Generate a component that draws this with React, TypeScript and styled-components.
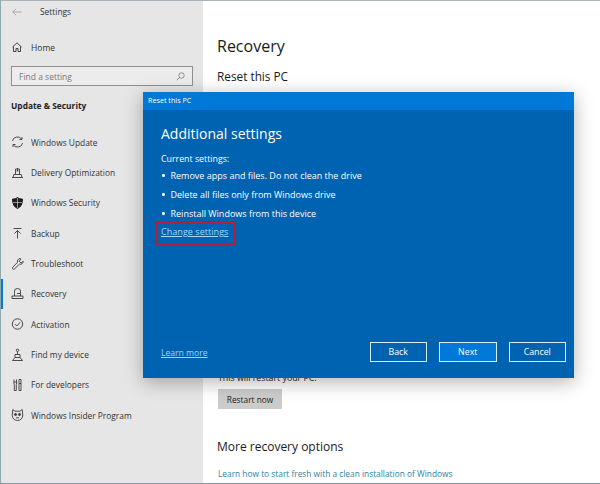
import React from "react";
import styled, { createGlobalStyle } from "styled-components";

const GlobalStyle = createGlobalStyle`
  html, body {
    margin: 0;
    padding: 0;
    background: #ffffff;
  }
  body {
    font-family: "Open Sans", "Noto Sans", sans-serif;
  }
`;

const Frame = styled.div`
  position: relative;
  display: flex;
  width: 600px;
  height: 484px;
  box-sizing: border-box;
  overflow: hidden;
  border-left: 1px solid #8fa9ad;
  border-top: 1px solid #a9b6b8;
  border-bottom: 1px solid #7f9ba3;
`;

const Sidebar = styled.aside`
  display: flex;
  flex-direction: column;
  width: 202px;
  flex-shrink: 0;
  background: #e6e6e6;
  color: #333333;
`;

const TitleRow = styled.div`
  display: flex;
  align-items: center;
  height: 21px;
  padding-left: 11px;
  font-size: 8.4px;
  gap: 18px;
`;

const HomeRow = styled.div`
  display: flex;
  align-items: center;
  gap: 9px;
  height: 20px;
  margin-top: 15px;
  padding-left: 11px;
  font-size: 8.5px;
`;

const SearchBox = styled.div`
  display: flex;
  align-items: center;
  justify-content: space-between;
  box-sizing: border-box;
  width: 182px;
  height: 20px;
  margin: 9px 0 0 10px;
  padding: 0 7px;
  background: #ececec;
  border: 1.5px solid #8f8f8f;
  color: #7a7a7a;
  font-size: 8.5px;
`;

const SectionTitle = styled.div`
  margin: 12px 0 13px 10px;
  font-size: 8.4px;
  font-weight: 700;
  line-height: 16px;
  color: #222;
`;

const NavRow = styled.div<{ $active?: boolean }>`
  display: flex;
  align-items: center;
  gap: 7px;
  height: 30.35px;
  box-sizing: border-box;
  padding-left: 8px;
  border-left: 2px solid ${(p) => (p.$active ? "#0078d7" : "transparent")};
  font-size: 8.4px;
  white-space: nowrap;
`;

const Main = styled.main`
  display: flex;
  flex-direction: column;
  align-items: flex-start;
  flex: 1;
  padding-left: 14px;
  color: #1a1a1a;
`;

const PageTitle = styled.h1`
  margin: 33px 0 0;
  font-size: 16px;
  font-weight: 400;
  line-height: 24px;
`;

const SubTitle = styled.h2`
  margin: 10px 0 0;
  font-size: 11.8px;
  font-weight: 400;
  line-height: 16px;
`;

const RestartNote = styled.p`
  margin: 287px 0 0 1px;
  font-size: 8.8px;
  line-height: 14px;
`;

const RestartButton = styled.button`
  width: 64px;
  height: 20px;
  margin: 4px 0 0 1px;
  padding: 0;
  border: 0;
  background: #cccccc;
  color: #222;
  font-family: inherit;
  font-size: 8.3px;
`;

const MoreTitle = styled.h2`
  margin: 29px 0 0;
  font-size: 12px;
  font-weight: 400;
  line-height: 18px;
`;

const MoreLink = styled.a`
  margin: 11px 0 0 1px;
  font-size: 8.35px;
  line-height: 13px;
  color: #2f7f9f;
  white-space: nowrap;
`;

const Dialog = styled.section`
  position: absolute;
  left: 142px;
  top: 91px;
  display: flex;
  flex-direction: column;
  width: 431px;
  height: 286px;
  background: #0063b1;
  color: #ffffff;
  box-shadow: 0 4px 18px rgba(0, 0, 0, 0.3);
`;

const DialogBar = styled.div`
  display: flex;
  align-items: center;
  box-sizing: border-box;
  height: 18px;
  padding: 0 0 2px 5px;
  background: #0078d7;
  font-size: 7.2px;
`;

const DialogBody = styled.div`
  display: flex;
  flex-direction: column;
  align-items: flex-start;
  flex: 1;
  padding: 14px 8px 0 18px;
`;

const DialogTitle = styled.h2`
  margin: 0;
  font-size: 14px;
  font-weight: 400;
  line-height: 20px;
`;

const CurrentLabel = styled.div`
  margin-top: 9px;
  font-size: 8.8px;
  line-height: 13px;
`;

const SettingsList = styled.ul`
  display: flex;
  flex-direction: column;
  gap: 6px;
  margin: 3px 0 0;
  padding: 0;
  list-style: none;
`;

const SettingsItem = styled.li`
  display: flex;
  align-items: center;
  gap: 6px;
  height: 13px;
  padding-left: 1px;
  font-size: 9px;
  &::before {
    content: "";
    width: 2.5px;
    height: 2.5px;
    border-radius: 50%;
    background: #ffffff;
  }
`;

const ChangeLink = styled.a`
  position: relative;
  margin-top: 5px;
  font-size: 9.1px;
  line-height: 14px;
  color: #a5d8f5;
  text-decoration: underline;
  &::after {
    content: "";
    position: absolute;
    inset: -4px -7px -6px -5px;
    border: 2.5px solid #b01f3c;
  }
`;

const DialogFooter = styled.div`
  display: flex;
  align-items: center;
  gap: 12px;
  margin-top: auto;
  margin-bottom: 16px;
  width: 100%;
`;

const LearnMore = styled.a`
  margin-right: auto;
  margin-top: 1px;
  font-size: 8.6px;
  color: #9fd3f2;
  text-decoration: underline;
`;

const FooterButton = styled.button<{ $primary?: boolean }>`
  width: 57.5px;
  height: 20px;
  padding: 0;
  box-sizing: border-box;
  border: 1.5px solid #d6ecf8;
  background: ${(p) => (p.$primary ? "#0078d7" : "transparent")};
  color: #ffffff;
  font-family: inherit;
  font-size: 8.8px;
`;

const Glyph: React.FC<{ children: React.ReactNode }> = ({ children }) => (
  <svg
    width="13"
    height="14"
    viewBox="0 0 13 14"
    fill="none"
    stroke="#3a3a3a"
    strokeWidth="0.9"
    style={{ flexShrink: 0 }}
  >
    {children}
  </svg>
);

const navItems: { label: string; active?: boolean; icon: React.ReactNode }[] = [
  {
    label: "Windows Update",
    icon: (
      <>
        <path d="M1.500 6a5 4.500 0 0 1 9-2.200" />
        <path d="M11.500 8a5 4.500 0 0 1-9 2.200" />
        <path d="M11 2v2.500H8.500M2 12V9.500h2.500" />
      </>
    ),
  },
  {
    label: "Delivery Optimization",
    icon: (
      <>
        <path d="M1 11.500h11M2 11.500 2.800 8.500h7.400l.8 3" />
        <path d="M4.500 8.500V3h4v5.500" />
        <path d="M6.500 2v3M5.500 5h2" />
      </>
    ),
  },
  {
    label: "Windows Security",
    icon: (
      <>
        <path
          d="M6.500 1.500c1.500 1 3 1.500 5 1.500 0 5-1.500 8-5 9.500C3 11 1.500 8 1.500 3c2 0 3.500-.5 5-1.500z"
          fill="#1c1c1c"
          stroke="#1c1c1c"
        />
        <path d="M6.500 2v10M2 6.500h9" stroke="#e6e6e6" strokeWidth="0.6" />
      </>
    ),
  },
  {
    label: "Backup",
    icon: <path d="M2.500 2.500h8M6.500 12.500V4.500M3.500 7.500l3-3 3 3" />,
  },
  {
    label: "Troubleshoot",
    icon: <path d="M9 1.500a3 3 0 0 0-2.500 3.800L1.800 10.200a1.200 1.200 0 0 0 1.700 1.700l4.900-4.700a3 3 0 0 0 3.800-2.900L10 6 8.200 4.200 10 2z" />,
  },
  {
    label: "Recovery",
    active: true,
    icon: (
      <>
        <path d="M1 11.500h11V9H1zM3.500 9V6.500M9.500 9V6.500" />
        <path d="M3.500 6.500V4a3 2.500 0 0 1 6 0v2.500H6" />
      </>
    ),
  },
  {
    label: "Activation",
    icon: (
      <>
        <circle cx="6.500" cy="7" r="5.200" />
        <path d="M4 7.200 5.800 9l3.300-3.700" />
      </>
    ),
  },
  {
    label: "Find my device",
    icon: (
      <>
        <circle cx="6.500" cy="2.300" r="1.200" />
        <path d="M6.500 3.500V6.500M4 6.500h5v3H4zM1.500 12.500 4 9.500M11.500 12.500 9 9.500M1.500 12.500h10" />
      </>
    ),
  },
  {
    label: "For developers",
    icon: (
      <>
        <path d="M3 1.500v2.500M5.500 1.500v2.500M2.800 4h3L5.300 6.500v6h-2v-6z" />
        <path d="M8 1.500h2v11H8zM8 5.500h2" />
      </>
    ),
  },
  {
    label: "Windows Insider Program",
    icon: (
      <>
        <path d="M1.800 1.500 4 3.200h5l2.200-1.700.6 5.500c0 3-2 5.500-5.300 5.500S1.200 10 1.200 7z" />
        <circle cx="4.500" cy="6.500" r="1.100" fill="#3a3a3a" />
        <circle cx="8.500" cy="6.500" r="1.100" fill="#3a3a3a" />
        <path d="M5 9.800h3" />
      </>
    ),
  },
];

const settings = [
  "Remove apps and files. Do not clean the drive",
  "Delete all files only from Windows drive",
  "Reinstall Windows from this device",
];

const App: React.FC = () => {
  return (
    <>
      <GlobalStyle />
      <Frame>
        <Sidebar>
          <TitleRow>
            <svg width="10" height="8" viewBox="0 0 10 8" fill="none" stroke="#9a9a9a" strokeWidth="0.8">
              <path d="M9.500 4H.8M4 .8.800 4 4 7.200" />
            </svg>
            <span>Settings</span>
          </TitleRow>
          <HomeRow>
            <svg width="10" height="10" viewBox="0 0 10 10" fill="none" stroke="#333" strokeWidth="0.9" style={{ flexShrink: 0 }}>
              <path d="M.5 5 5 .8 9.500 5M1.500 4.500v5h2.500V6.500h2v3h2.500v-5" />
            </svg>
            <span>Home</span>
          </HomeRow>
          <SearchBox>
            <span>Find a setting</span>
            <svg width="9" height="9" viewBox="0 0 9 9" fill="none" stroke="#777" strokeWidth="0.8">
              <circle cx="5.500" cy="3.500" r="2.700" />
              <path d="M3.500 5.500 .8 8.200" />
            </svg>
          </SearchBox>
          <SectionTitle>Update &amp; Security</SectionTitle>
          {navItems.map((item) => (
            <NavRow key={item.label} $active={item.active}>
              <Glyph>{item.icon}</Glyph>
              <span>{item.label}</span>
            </NavRow>
          ))}
        </Sidebar>
        <Main>
          <PageTitle>Recovery</PageTitle>
          <SubTitle>Reset this PC</SubTitle>
          <RestartNote>This will restart your PC.</RestartNote>
          <RestartButton>Restart now</RestartButton>
          <MoreTitle>More recovery options</MoreTitle>
          <MoreLink>Learn how to start fresh with a clean installation of Windows</MoreLink>
        </Main>
        <Dialog>
          <DialogBar>Reset this PC</DialogBar>
          <DialogBody>
            <DialogTitle>Additional settings</DialogTitle>
            <CurrentLabel>Current settings:</CurrentLabel>
            <SettingsList>
              {settings.map((s) => (
                <SettingsItem key={s}>{s}</SettingsItem>
              ))}
            </SettingsList>
            <ChangeLink>Change settings</ChangeLink>
            <DialogFooter>
              <LearnMore>Learn more</LearnMore>
              <FooterButton>Back</FooterButton>
              <FooterButton $primary>Next</FooterButton>
              <FooterButton>Cancel</FooterButton>
            </DialogFooter>
          </DialogBody>
        </Dialog>
      </Frame>
    </>
  );
};

export default App;
